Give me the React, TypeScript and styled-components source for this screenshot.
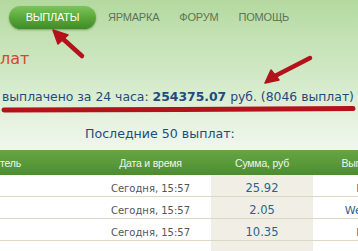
import React from "react";
import styled, { createGlobalStyle } from "styled-components";

const Global = createGlobalStyle`
  html, body { margin: 0; padding: 0; }
  body {
    width: 358px;
    height: 251px;
    overflow: hidden;
    background: #ffffff;
    font-family: "DejaVu Sans", Verdana, sans-serif;
  }
`;

const Page = styled.div`
  position: relative;
  width: 358px;
  height: 251px;
  overflow: hidden;
`;

const Top = styled.div`
  background: linear-gradient(180deg, #b3d99f 0%, #c4e2b4 25%, #d4eaca 55%, #e6f2df 80%, #f0f6ed 100%);
  padding-bottom: 8px;
`;

const Nav = styled.nav`
  display: flex;
  align-items: center;
  height: 33px;
  padding-left: 9px;
  box-sizing: border-box;
`;

const NavItem = styled.a<{ $active?: boolean }>`
  display: flex;
  align-items: center;
  justify-content: center;
  height: 23px;
  box-sizing: border-box;
  font-family: "Liberation Sans", Arial, sans-serif;
  font-size: 11px;
  letter-spacing: -0.2px;
  text-transform: uppercase;
  text-decoration: none;
  color: ${(p) => (p.$active ? "#ffffff" : "#5d7451")};
  margin-right: ${(p) => (p.$active ? "12px" : "20px")};
  width: ${(p) => (p.$active ? "87px" : "auto")};
  border-radius: 12px;
  background: ${(p) =>
    p.$active ? "linear-gradient(180deg, #7cc45a 0%, #5aa83a 50%, #3f8c27 100%)" : "transparent"};
  box-shadow: ${(p) => (p.$active ? "0 1px 2px rgba(40,80,20,0.45)" : "none")};
  margin-top: 1px;
`;

const Heading = styled.h1`
  margin: 16px 0 0 0;
  height: 20px;
  font-family: "DejaVu Sans", Verdana, sans-serif;
  font-weight: normal;
  font-size: 16px;
  line-height: 20px;
  color: #d9452d;
`;

const Stats = styled.div`
  margin-top: 20px;
  padding-left: 2px;
  font-size: 12.4px;
  line-height: 16px;
  color: #1e4c7e;
  white-space: nowrap;
`;

const Strong = styled.b`
  font-weight: bold;
`;

const Subtitle = styled.div`
  margin-top: 21px;
  padding-left: 85px;
  font-size: 12.6px;
  line-height: 16px;
  color: #1e4c7e;
`;

const Table = styled.div`
  display: grid;
  grid-template-columns: 90px 121px 102px 124px;
  width: 437px;
`;

const HeadCell = styled.div<{ $align?: string }>`
  height: 25px;
  display: flex;
  align-items: center;
  justify-content: ${(p) => p.$align || "center"};
  background: linear-gradient(180deg, #65a545 0%, #5a9a3b 50%, #4c8b30 100%);
  color: #eef7e8;
  font-family: "Liberation Sans", Arial, sans-serif;
  font-size: 10.5px;
  letter-spacing: -0.2px;
  white-space: nowrap;
`;

const Cell = styled.div<{ $shaded?: boolean; $color?: string; $size?: number }>`
  height: 22px;
  box-sizing: border-box;
  padding-top: 5px;
  display: flex;
  align-items: center;
  justify-content: center;
  border-bottom: 1px solid #dcd8c3;
  background: ${(p) => (p.$shaded ? "#f1efe5" : "#ffffff")};
  color: ${(p) => p.$color || "#555555"};
  font-family: "DejaVu Sans", Verdana, sans-serif;
  font-size: ${(p) => p.$size || 10}px;
  white-space: nowrap;
`;

const Overlay = styled.svg`
  position: absolute;
  left: 0;
  top: 0;
  pointer-events: none;
`;

const rows = [
  { date: "Сегодня, 15:57", sum: "25.92", sys: "Payeer", link: false },
  { date: "Сегодня, 15:57", sum: "2.05", sys: "WebMoney", link: true },
  { date: "Сегодня, 15:57", sum: "10.35", sys: "Payeer", link: false },
  { date: "", sum: "", sys: "", link: false },
];

export default function App() {
  return (
    <Page>
      <Global />
      <Top>
        <Nav>
          <NavItem $active>Выплаты</NavItem>
          <NavItem>Ярмарка</NavItem>
          <NavItem>Форум</NavItem>
          <NavItem>Помощь</NavItem>
        </Nav>
        <Heading>лат</Heading>
        <Stats>
          выплачено за 24 часа: <Strong>254375.07</Strong> руб. (8046 выплат)
        </Stats>
        <Subtitle>Последние 50 выплат:</Subtitle>
      </Top>
      <Table>
        <HeadCell $align="flex-start">тель</HeadCell>
        <HeadCell>Дата и время</HeadCell>
        <HeadCell>Сумма, руб</HeadCell>
        <HeadCell>Выплачено на</HeadCell>
        {rows.map((r, i) => (
          <React.Fragment key={i}>
            <Cell />
            <Cell>{r.date}</Cell>
            <Cell $shaded $color="#2f5e94" $size={11.5}>
              {r.sum}
            </Cell>
            <Cell $color={r.link ? "#2f5e94" : "#555555"} $size={11}>
              {r.sys}
            </Cell>
          </React.Fragment>
        ))}
      </Table>
      <Overlay width="358" height="251" viewBox="0 0 358 251">
        <g stroke="#b3121a" fill="#b3121a" strokeLinecap="round" strokeLinejoin="round">
          <line x1="82" y1="56" x2="62" y2="38" strokeWidth="4.5" />
          <polygon points="53,30 68,35 58,44" strokeWidth="1.5" />
          <line x1="310" y1="58" x2="275" y2="76" strokeWidth="4.5" />
          <polygon points="265,83 271,70 279,80" strokeWidth="1.5" />
          <path d="M4 110 L 180 109.5 L 353 108.5" strokeWidth="5" fill="none" />
        </g>
      </Overlay>
    </Page>
  );
}
